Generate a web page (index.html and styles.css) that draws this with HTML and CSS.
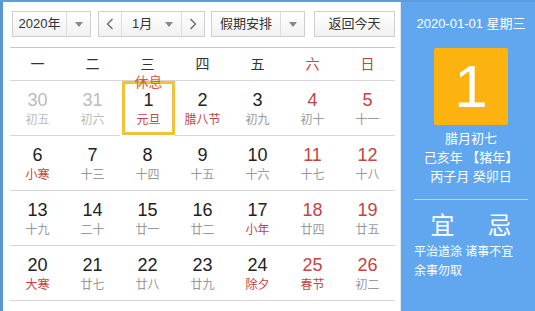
FILE: index.html
```html
<!DOCTYPE html>
<html lang="zh-CN">
<head>
  <meta charset="UTF-8" />
  <title>万年历</title>
  <link rel="stylesheet" href="styles.css">
</head>
<body>
  <div class="page">
    <div class="cal">
      <div class="toolbar">
        <div class="sel sel-year">
          <span class="sel-text">2020年</span>
          <span class="sel-arrow"><i class="tri"></i></span>
        </div>
        <div class="month-group">
          <span class="nav">
            <svg width="8" height="12" viewBox="0 0 8 12"><polyline points="6.5,1 1.5,6 6.5,11" fill="none" stroke="#666" stroke-width="1.3"/></svg>
          </span>
          <span class="month">
            <span class="month-text">1月</span>
            <i class="tri"></i>
          </span>
          <span class="nav">
            <svg width="8" height="12" viewBox="0 0 8 12"><polyline points="1.5,1 6.5,6 1.5,11" fill="none" stroke="#666" stroke-width="1.3"/></svg>
          </span>
        </div>
        <div class="sel sel-holiday">
          <span class="sel-text">假期安排</span>
          <span class="sel-arrow"><i class="tri"></i></span>
        </div>
        <div class="btn-today">返回今天</div>
      </div>

      <div class="weekdays">
        <span>一</span><span>二</span><span>三</span><span>四</span><span>五</span>
        <span class="we">六</span><span class="we">日</span>
      </div>

      <div class="days">
        <div class="day other"><b>30</b><em>初五</em></div>
        <div class="day other"><b>31</b><em>初六</em></div>
        <div class="day today"><span class="rest">休息</span><b>1</b><em class="fest">元旦</em></div>
        <div class="day"><b>2</b><em class="fest">腊八节</em></div>
        <div class="day"><b>3</b><em>初九</em></div>
        <div class="day we"><b>4</b><em>初十</em></div>
        <div class="day we"><b>5</b><em>十一</em></div>

        <div class="day"><b>6</b><em class="fest">小寒</em></div>
        <div class="day"><b>7</b><em>十三</em></div>
        <div class="day"><b>8</b><em>十四</em></div>
        <div class="day"><b>9</b><em>十五</em></div>
        <div class="day"><b>10</b><em>十六</em></div>
        <div class="day we"><b>11</b><em>十七</em></div>
        <div class="day we"><b>12</b><em>十八</em></div>

        <div class="day"><b>13</b><em>十九</em></div>
        <div class="day"><b>14</b><em>二十</em></div>
        <div class="day"><b>15</b><em>廿一</em></div>
        <div class="day"><b>16</b><em>廿二</em></div>
        <div class="day"><b>17</b><em class="fest">小年</em></div>
        <div class="day we"><b>18</b><em>廿四</em></div>
        <div class="day we"><b>19</b><em>廿五</em></div>

        <div class="day"><b>20</b><em class="fest">大寒</em></div>
        <div class="day"><b>21</b><em>廿七</em></div>
        <div class="day"><b>22</b><em>廿八</em></div>
        <div class="day"><b>23</b><em>廿九</em></div>
        <div class="day"><b>24</b><em class="fest">除夕</em></div>
        <div class="day we"><b>25</b><em class="fest">春节</em></div>
        <div class="day we"><b>26</b><em>初二</em></div>
      </div>
    </div>

    <div class="side">
      <div class="side-date">2020-01-01 星期三</div>
      <div class="big-day">1</div>
      <div class="lunar">
        <div>腊月初七</div>
        <div>己亥年 【猪年】</div>
        <div>丙子月 癸卯日</div>
      </div>
      <div class="yiji">
        <span>宜</span><span>忌</span>
      </div>
      <div class="yiji-text">平治道涂 诸事不宜 余事勿取</div>
    </div>
  </div>
</body>
</html>
```

FILE: styles.css
```css
:root {
  --blue: #61a7f0;
  --line: #d6d6d6;
  --red: #c5443f;
  --gray: #999999;
}

* {
  box-sizing: border-box;
  margin: 0;
  padding: 0;
}

body {
  width: 535px;
  height: 311px;
  overflow: hidden;
  background: #ffffff;
  font-family: "Liberation Sans", "Noto Sans CJK SC", sans-serif;
  color: #333333;
}

.page {
  display: flex;
  height: 311px;
  border-top: 2px solid #5a9edf;
}

/* left calendar */
.cal {
  width: 400px;
  border-left: 3px solid #5b97cf;
  padding: 9px 5px 0 7px;
}

.toolbar {
  display: flex;
  align-items: center;
  height: 26px;
  padding-left: 2px;
  font-size: 13px;
}

.sel,
.month-group,
.btn-today {
  display: flex;
  height: 26px;
  border: 1px solid #cfcfcf;
  background: linear-gradient(#ffffff, #f1f1f1);
  line-height: 24px;
  color: #333;
}

.sel-text {
  flex: 1;
  text-align: center;
}

.sel-arrow {
  width: 24px;
  display: flex;
  align-items: center;
  justify-content: center;
  border-left: 1px solid #dddddd;
}

.tri {
  display: inline-block;
  width: 0;
  height: 0;
  border-left: 4px solid transparent;
  border-right: 4px solid transparent;
  border-top: 5px solid #888;
}

.sel-year {
  width: 79px;
}

.month-group {
  width: 107px;
  margin-left: 7px;
}

.nav {
  width: 22px;
  display: flex;
  align-items: center;
  justify-content: center;
}

.month {
  flex: 1;
  display: flex;
  align-items: center;
  border-left: 1px solid #dddddd;
  border-right: 1px solid #dddddd;
  padding: 0 8px 0 10px;
}

.month-text {
  flex: 1;
}

.sel-holiday {
  width: 94px;
  margin-left: 6px;
}

.btn-today {
  width: 81px;
  margin-left: 9px;
  justify-content: center;
}

.weekdays {
  display: grid;
  grid-template-columns: repeat(7, 55px);
  margin-top: 10px;
  height: 34px;
  border-top: 1px solid #c8c8c8;
  border-bottom: 1px solid var(--line);
  font-size: 14px;
  line-height: 32px;
  text-align: center;
}

.weekdays .we {
  color: var(--red);
}

.days {
  display: grid;
  grid-template-columns: repeat(7, 55px);
  grid-auto-rows: 55px;
}

.day {
  position: relative;
  display: flex;
  flex-direction: column;
  align-items: center;
  padding-top: 9px;
  border-bottom: 1px solid var(--line);
}

.day b {
  font-weight: normal;
  font-size: 18px;
  line-height: 20px;
  color: #222;
}

.day em {
  font-style: normal;
  font-size: 12px;
  line-height: 20px;
  color: var(--gray);
}

.day.we b {
  color: var(--red);
}

.day.other b,
.day.other em {
  color: #bbbbbb;
}

.day em.fest {
  color: var(--red);
}

.day.today {
  margin: 0 0 1px 2px;
  border: 3px solid #f3c23d;
  padding-top: 6px;
}

.rest {
  position: absolute;
  top: -9px;
  left: 0;
  right: 0;
  text-align: center;
  font-size: 14px;
  line-height: 14px;
  color: #e8552f;
}

/* right info panel */
.side {
  flex: 1;
  border-left: 1px solid #e2e6ea;
  background: var(--blue);
  color: #ffffff;
  padding: 12px 7px 0 13px;
  text-align: center;
}

.side-date {
  font-size: 13px;
  line-height: 20px;
}

.big-day {
  width: 74px;
  height: 77px;
  margin: 14px auto 0;
  background: #fdb30f;
  border-radius: 2px;
  font-size: 60px;
  line-height: 77px;
}

.lunar {
  margin-top: 4px;
  font-size: 13px;
  line-height: 19px;
  padding-bottom: 13px;
  border-bottom: 1px solid rgba(255, 255, 255, 0.55);
}

.yiji {
  display: grid;
  grid-template-columns: 1fr 1fr;
  margin-top: 12px;
  font-size: 24px;
  line-height: 28px;
}

.yiji-text {
  margin-top: 3px;
  text-align: left;
  font-size: 12px;
  line-height: 19px;
}
```
